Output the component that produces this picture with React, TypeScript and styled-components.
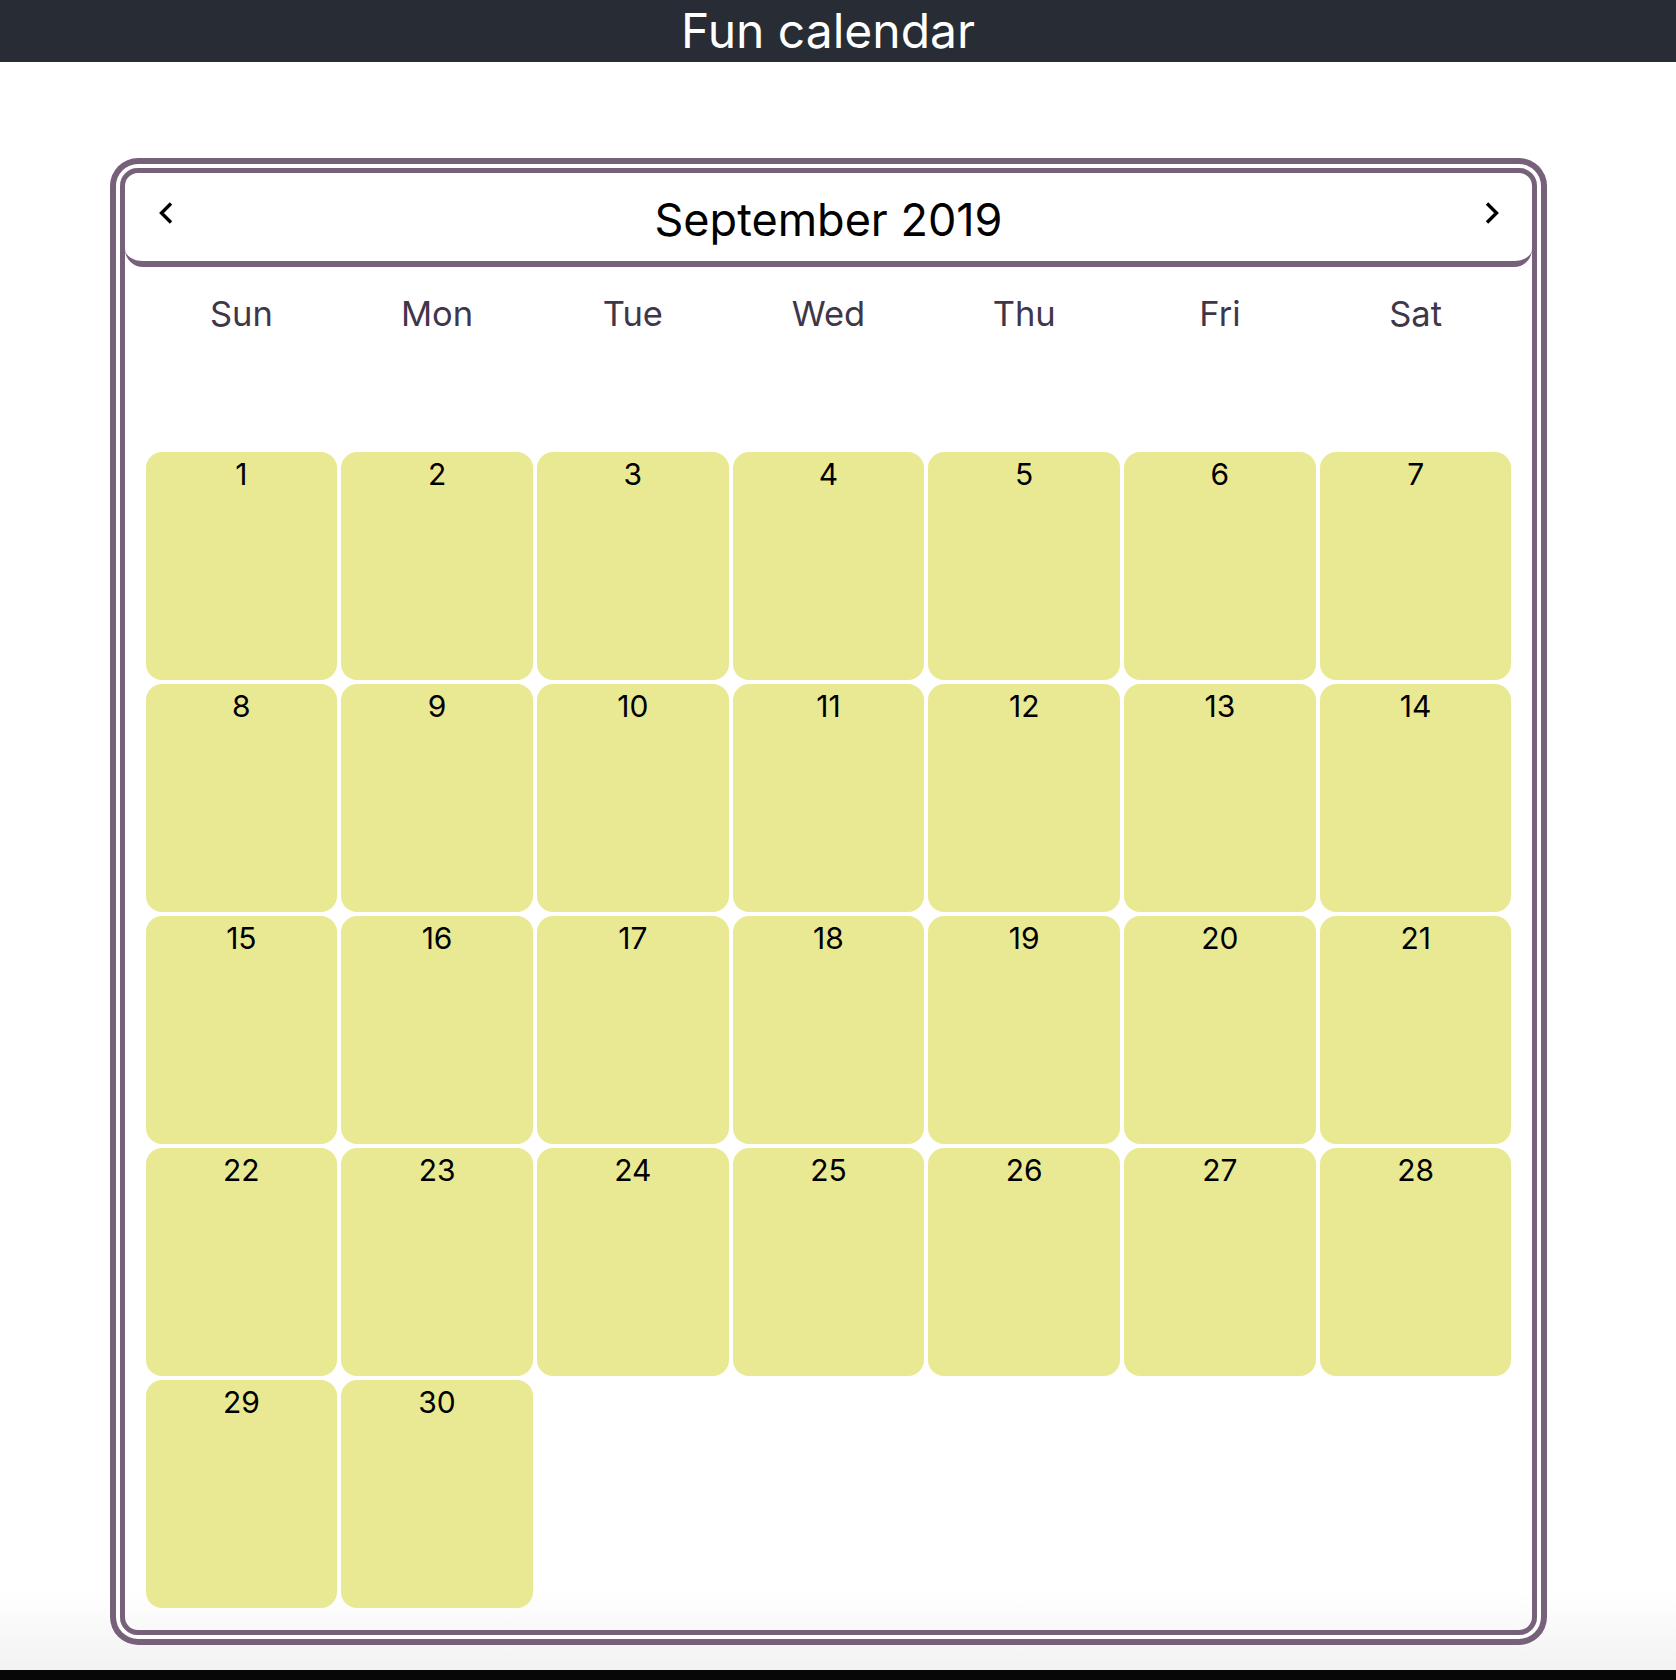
import React from "react";
import styled, { createGlobalStyle } from "styled-components";

const GlobalStyle = createGlobalStyle`
  html {
    min-height: 100%;
    background: linear-gradient(
      to bottom,
      #ffffff 0,
      #ffffff 1592px,
      #f2f2f2 1670px,
      #070707 1670px,
      #070707 100%
    );
  }
  body {
    margin: 0;
    font-family: Inter, "Noto Sans", "Liberation Sans", sans-serif;
    -webkit-font-smoothing: antialiased;
  }
`;

const PURPLE = "#76607a";

const Page = styled.div`
  min-height: 1680px;
  display: flex;
  flex-direction: column;
`;

const TopBar = styled.header`
  height: 62px;
  background: #282c34;
  display: flex;
  align-items: center;
  justify-content: center;
  padding-right: 20px;
`;

const Title = styled.h1`
  margin: 0;
  color: #ffffff;
  font-size: 48px;
  font-weight: 400;
  line-height: 1;
`;

const Main = styled.main`
  width: 1656px;
  display: flex;
  justify-content: center;
  padding-top: 106px;
`;

const Calendar = styled.section`
  width: 1417px;
  box-sizing: border-box;
  border: 5px solid ${PURPLE};
  border-radius: 18px;
  box-shadow: 0 0 0 4px #ffffff, 0 0 0 10px ${PURPLE};
  display: flex;
  flex-direction: column;
  padding-bottom: 22px;
`;

const MonthBar = styled.div`
  height: 88px;
  border-bottom: 6px solid ${PURPLE};
  border-radius: 0 0 18px 18px;
  display: flex;
  align-items: center;
  justify-content: space-between;
  padding: 0 32px 0 33px;
`;

const MonthName = styled.h2`
  margin: 0;
  padding-top: 4px;
  font-size: 45px;
  font-weight: 400;
  color: #000;
  line-height: 1;
`;

const NavButton = styled.button`
  border: 0;
  background: none;
  padding: 0;
  margin-bottom: 8px;
  width: 16px;
  height: 24px;
  display: flex;
  align-items: center;
  justify-content: center;
  cursor: pointer;
`;

const Grid = styled.div<{ $rowHeight?: number }>`
  display: grid;
  grid-template-columns: repeat(7, 1fr);
  column-gap: 4px;
  row-gap: 4px;
  padding: 0 20px 0 21px;
  ${(p) => (p.$rowHeight ? `grid-auto-rows: ${p.$rowHeight}px;` : "")}
`;

const WeekdayRow = styled(Grid)`
  margin-top: 27px;
  margin-bottom: 118px;
`;

const Weekday = styled.div`
  text-align: center;
  font-size: 34.5px;
  line-height: 40px;
  color: #40364a;
`;

const DayCell = styled.div`
  background: #e9e993;
  border-radius: 16px;
  display: flex;
  justify-content: center;
  align-items: flex-start;
  padding-top: 4px;
`;

const DayNumber = styled.span`
  font-size: 30px;
  line-height: 36px;
  color: #000;
`;

const Chevron = ({ dir }: { dir: "left" | "right" }) => (
  <svg width="16" height="24" viewBox="0 0 16 24" aria-hidden="true">
    <polyline
      points={dir === "left" ? "13,2.5 3.5,12 13,21.5" : "3,2.5 12.5,12 3,21.5"}
      fill="none"
      stroke="#000"
      strokeWidth="3.4"
      strokeLinejoin="miter"
    />
  </svg>
);

const weekdays = ["Sun", "Mon", "Tue", "Wed", "Thu", "Fri", "Sat"];
const days = Array.from({ length: 30 }, (_, i) => i + 1);

export default function App() {
  return (
    <Page>
      <GlobalStyle />
      <TopBar>
        <Title>Fun calendar</Title>
      </TopBar>
      <Main>
        <Calendar>
          <MonthBar>
            <NavButton aria-label="Previous month">
              <Chevron dir="left" />
            </NavButton>
            <MonthName>September 2019</MonthName>
            <NavButton aria-label="Next month">
              <Chevron dir="right" />
            </NavButton>
          </MonthBar>
          <WeekdayRow>
            {weekdays.map((d) => (
              <Weekday key={d}>{d}</Weekday>
            ))}
          </WeekdayRow>
          <Grid $rowHeight={228}>
            {days.map((d) => (
              <DayCell key={d}>
                <DayNumber>{d}</DayNumber>
              </DayCell>
            ))}
          </Grid>
        </Calendar>
      </Main>
    </Page>
  );
}
